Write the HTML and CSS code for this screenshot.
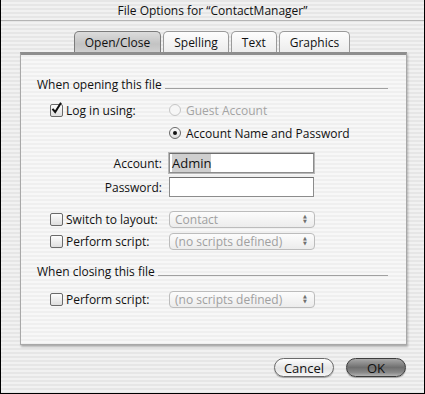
FILE: index.html
```html
<!DOCTYPE html>
<html lang="en">
  <head>
    <meta charset="UTF-8" />
    <meta name="viewport" content="width=device-width, initial-scale=1.0" />
    <title>File Options</title>
    <link rel="stylesheet" href="styles.css">
  </head>
  <body>
    <div class="window">
      <div class="title-bar">File Options for “ContactManager”</div>

      <div class="tabs">
        <div class="tab selected">Open/Close</div>
        <div class="tab">Spelling</div>
        <div class="tab">Text</div>
        <div class="tab">Graphics</div>
      </div>

      <div class="panel">
        <div class="section-title"><span>When opening this file</span><i></i></div>

        <div class="row row-login">
          <div class="label-col">
            <span class="checkbox checked">
              <svg width="13" height="13" viewBox="0 0 13 13"><path d="M2.5 6.8 L5.2 10 L11 0.8" fill="none" stroke="#111" stroke-width="2"/></svg>
            </span>
            <span>Log in using:</span>
          </div>
          <div class="control"><span class="radio disabled"></span><span class="dim">Guest Account</span></div>
        </div>

        <div class="row row-radio">
          <div class="label-col"></div>
          <div class="control"><span class="radio on"><b></b></span><span>Account Name and Password</span></div>
        </div>

        <div class="row row-field">
          <div class="label-col right">Account:</div>
          <div class="control"><div class="field focused"><span class="sel">Admin</span></div></div>
        </div>

        <div class="row row-field2">
          <div class="label-col right">Password:</div>
          <div class="control"><div class="field"></div></div>
        </div>

        <div class="row row-popup">
          <div class="label-col"><span class="checkbox"></span><span>Switch to layout:</span></div>
          <div class="control"><div class="popup"><span>Contact</span><em><small>▲</small><small>▼</small></em></div></div>
        </div>

        <div class="row row-popup2">
          <div class="label-col"><span class="checkbox"></span><span>Perform script:</span></div>
          <div class="control"><div class="popup"><span>(no scripts defined)</span><em><small>▲</small><small>▼</small></em></div></div>
        </div>

        <div class="section-title closing"><span>When closing this file</span><i></i></div>

        <div class="row row-close">
          <div class="label-col"><span class="checkbox"></span><span>Perform script:</span></div>
          <div class="control"><div class="popup"><span>(no scripts defined)</span><em><small>▲</small><small>▼</small></em></div></div>
        </div>
      </div>

      <div class="buttons">
        <button type="button" class="btn">Cancel</button>
        <button type="button" class="btn default">OK</button>
      </div>
    </div>
  </body>
</html>
```

FILE: styles.css
```css
body {
  margin: 0;
  background-color: #000;
  font-family: "Open Sans", "DejaVu Sans", sans-serif;
  font-size: 12px;
  color: #111;
}

.window {
  width: 423px;
  height: 393px;
  border: 1px solid #000;
  border-top: none;
  background: repeating-linear-gradient(#e6e6e6 0px, #e6e6e6 2px, #f1f1f1 2px, #f1f1f1 4px);
  overflow: hidden;
}

.title-bar {
  height: 21px;
  line-height: 21px;
  text-align: center;
  font-size: 12px;
  border-bottom: 1px solid #b4b4b4;
  box-sizing: border-box;
}

.tabs {
  display: flex;
  justify-content: center;
  margin-top: 10px;
  gap: 2px;
  position: relative;
  z-index: 1;
  padding-right: 1px;
}

.tab {
  height: 21px;
  line-height: 21px;
  padding: 0 10px;
  border: 1px solid #9a9a9a;
  border-bottom: none;
  border-radius: 5px 5px 0 0;
  background: linear-gradient(#fdfdfd, #ececec);
  font-size: 12px;
  box-sizing: border-box;
}

.tab.selected {
  background: linear-gradient(#dcdcdc, #c3c3c3 60%, #cfcfcf);
  border-color: #7c7c7c;
}

.panel {
  margin: 0 17px 0 19px;
  height: 293px;
  border: 1px solid #a8a8a8;
  border-top: 3px solid #8e8e8e;
  box-sizing: border-box;
  background: repeating-linear-gradient(#efefef 0px, #efefef 2px, #f7f7f7 2px, #f7f7f7 4px);
  box-shadow: 1px 2px 2px rgba(0, 0, 0, 0.25);
  padding: 20px 17px 0 16px;
}

.section-title {
  display: flex;
  align-items: flex-end;
  height: 18px;
  margin-right: 1px;
}

.section-title span {
  padding-right: 3px;
}

.section-title i {
  flex: 1;
  border-bottom: 1px solid #a0a0a0;
  margin-bottom: 4px;
}

.section-title.closing {
  margin-top: 12px;
}

.row {
  display: flex;
  align-items: center;
  padding-left: 13px;
}

.row-login {
  margin-top: 7px;
  height: 20px;
}

.row-radio {
  margin-top: 3px;
  height: 20px;
}

.row-field {
  margin-top: 10px;
  height: 20px;
}

.row-field2 {
  margin-top: 4px;
  height: 20px;
}

.row-popup {
  margin-top: 13px;
  height: 18px;
}

.row-popup2 {
  margin-top: 4px;
  height: 18px;
}

.row-close {
  margin-top: 10px;
  height: 18px;
}

.label-col {
  width: 112px;
  display: flex;
  align-items: center;
  gap: 3px;
  margin-right: 7px;
}

.label-col.right {
  justify-content: flex-end;
}

.control {
  display: flex;
  align-items: center;
  gap: 5px;
}

.dim {
  color: #a4a4a4;
}

.checkbox {
  width: 13px;
  height: 13px;
  border: 1px solid #6a6a6a;
  border-radius: 2px;
  background: linear-gradient(#fdfdfd, #dedede);
  box-sizing: border-box;
  display: inline-block;
  position: relative;
}

.checkbox svg {
  position: absolute;
  left: -1px;
  top: -3px;
}

.radio {
  width: 12px;
  height: 12px;
  border: 1px solid #6a6a6a;
  border-radius: 50%;
  background: linear-gradient(#fdfdfd, #dcdcdc);
  box-sizing: border-box;
  display: flex;
  justify-content: center;
  align-items: center;
}

.radio.disabled {
  border-color: #c6c6c6;
  background: #f6f6f6;
}

.radio b {
  width: 4px;
  height: 4px;
  border-radius: 50%;
  background-color: #111;
}

.field {
  width: 145px;
  height: 20px;
  border: 1px solid #8c8c8c;
  border-top-color: #6e6e6e;
  background-color: #fff;
  box-sizing: border-box;
  padding: 0 2px;
  line-height: 18px;
  font-size: 13px;
}

.field.focused {
  box-shadow: 0 0 0 1px #b8b8b8;
}

.sel {
  background-color: #cfcfcf;
}

.popup {
  width: 146px;
  height: 17px;
  border: 1px solid #bcbcbc;
  border-radius: 4px;
  background: linear-gradient(#fcfcfc, #ececec);
  box-sizing: border-box;
  display: flex;
  align-items: center;
  color: #a0a0a0;
  padding-left: 5px;
  font-size: 12px;
}

.popup span {
  flex: 1;
}

.popup em {
  width: 18px;
  height: 15px;
  display: flex;
  flex-direction: column;
  align-items: center;
  justify-content: center;
  font-style: normal;
  color: #6f6f6f;
}

.popup small {
  font-size: 5px;
  line-height: 5px;
}

.buttons {
  display: flex;
  justify-content: flex-end;
  gap: 12px;
  margin-top: 13px;
  padding-right: 18px;
}

.btn {
  width: 60px;
  height: 19px;
  border: 1px solid #6a6a6a;
  border-radius: 10px;
  background: linear-gradient(#fefefe, #e4e4e4 55%, #f6f6f6);
  font-family: "Open Sans", "DejaVu Sans", sans-serif;
  font-size: 13px;
  line-height: 16px;
  padding: 0;
  color: #111;
  box-shadow: 0 1px 1px rgba(0, 0, 0, 0.3);
}

.btn.default {
  background: linear-gradient(#a8a8a8, #6f6f6f 50%, #8a8a8a 80%, #b4b4b4);
  border-color: #3c3c3c;
}
```
